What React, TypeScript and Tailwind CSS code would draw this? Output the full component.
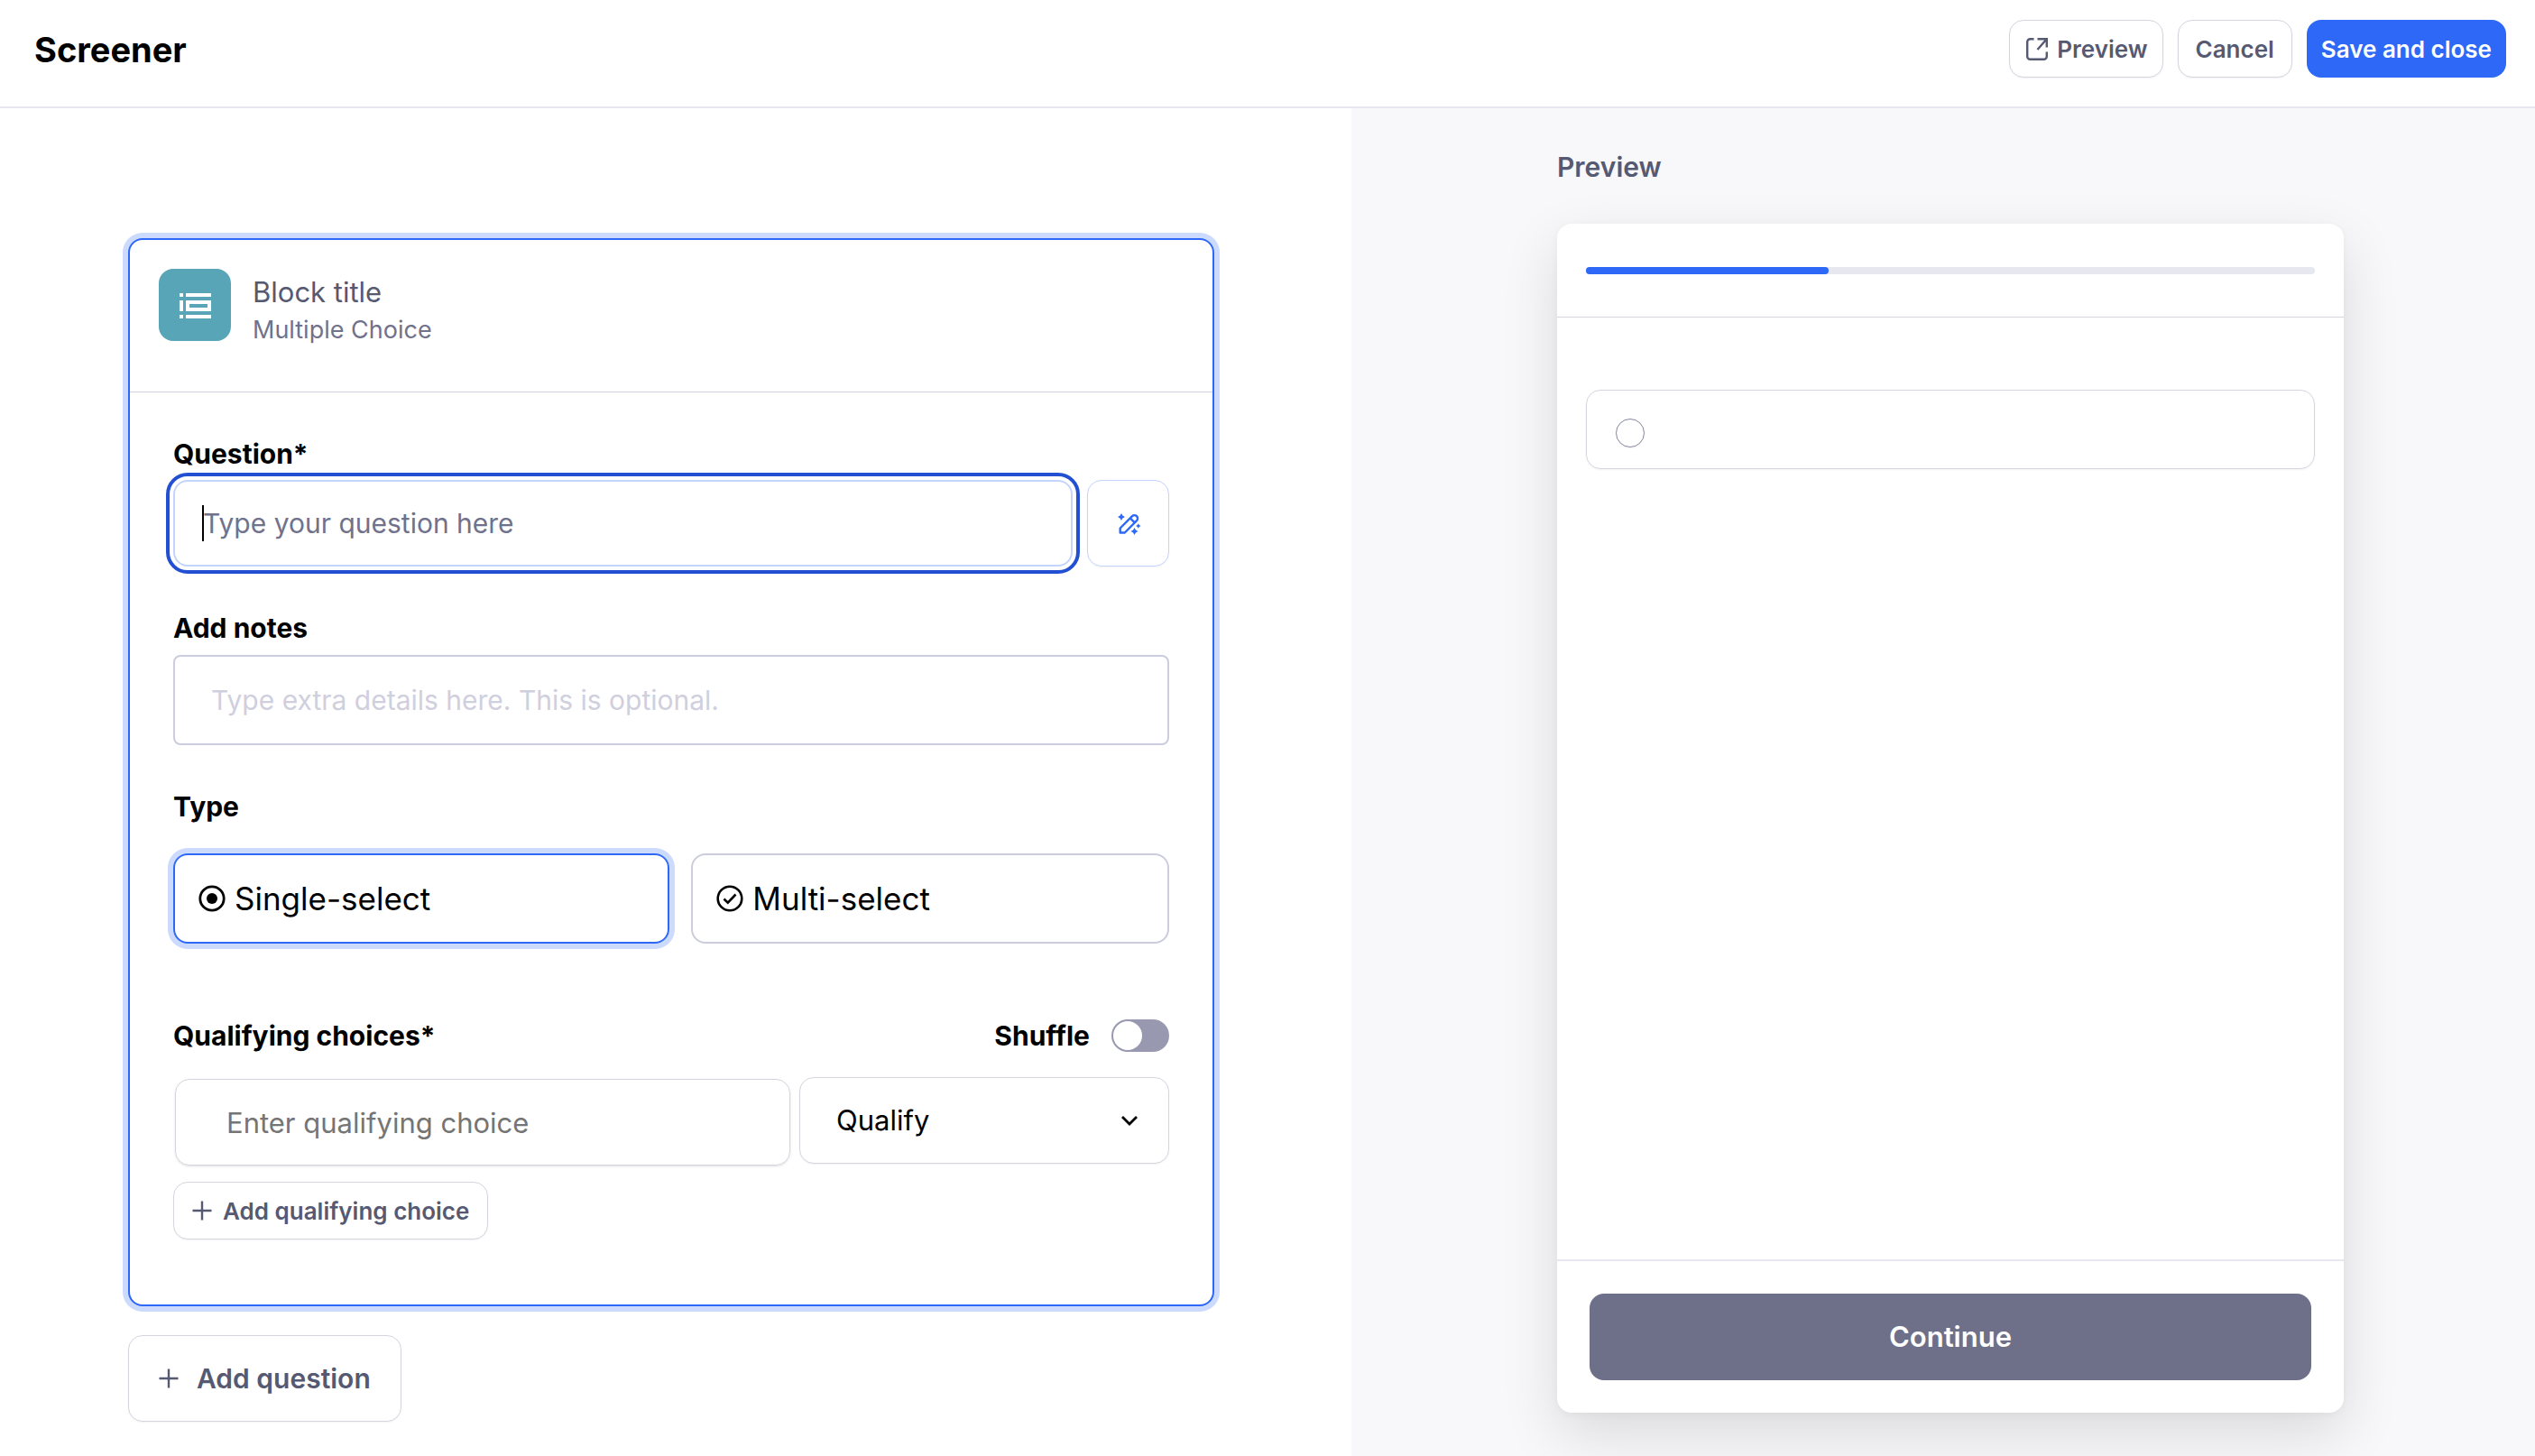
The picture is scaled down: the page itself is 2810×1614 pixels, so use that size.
import { useState } from "react";
import type { ReactNode } from "react";

interface TypeOptionProps {
  value: string;
  label: string;
  checked: boolean;
  onSelect: (value: string) => void;
  icon: ReactNode;
}

const outlineButton =
  "flex items-center justify-center rounded-2xl border border-[#d5d5e0] bg-white font-semibold text-[#565972] shadow-xs";

function ExternalIcon() {
  return (
    <svg className="h-7 w-7" viewBox="0 0 28 28" fill="none" stroke="currentColor" strokeWidth="2.4">
      <path d="M10.5 3.2H6.5A3.3 3.3 0 0 0 3.2 6.5V22.5A3.3 3.3 0 0 0 6.5 25.8H21.5A3.3 3.3 0 0 0 24.8 22.5V17.5" />
      <path d="M14.5 3.2H24.8V12.5M24.5 3.5L14.5 15" />
    </svg>
  );
}

function PlusIcon() {
  return (
    <svg className="h-[22px] w-[22px] shrink-0" viewBox="0 0 22 22" stroke="currentColor" strokeWidth="2.4">
      <path d="M11 0.5V21.5M0.5 11H21.5" />
    </svg>
  );
}

function ListBlockIcon() {
  return (
    <svg className="h-10 w-10" viewBox="0 0 40 40" fill="#fff">
      <path d="M3 7h4v4H3zM3 15h4v12H3zM3 31h4v4H3zM10 7h28v4H10zM10 31h28v4H10z" />
      <path fillRule="evenodd" d="M10 15h28v12H10zM14 19v4h20v-4z" />
    </svg>
  );
}

function MagicPenIcon() {
  return (
    <svg className="h-7 w-7" viewBox="0 0 28 28" fill="none" stroke="currentColor" strokeWidth="2.4" strokeLinejoin="round">
      <path d="M4.7 24.5V19.5L18 6.2A3.5 3.5 0 0 1 23 11.2L9.8 24.5Z" />
      <path d="M15.8 8.4L20.8 13.4" />
      <path
        fill="currentColor"
        stroke="none"
        d="M6 3L7.4 5.6L10 7L7.4 8.4L6 11L4.6 8.4L2 7L4.6 5.6ZM20.5 19L21.9 21.6L24.5 23L21.9 24.4L20.5 27L19.1 24.4L16.5 23L19.1 21.6ZM24.8 14.2L25.8 16L27.6 17L25.8 18L24.8 19.8L23.8 18L22 17L23.8 16Z"
      />
    </svg>
  );
}

function RadioIcon() {
  return (
    <svg className="h-[30px] w-[30px]" viewBox="0 0 30 30" fill="none" stroke="currentColor" strokeWidth="2.8">
      <circle cx="15" cy="15" r="13.2" />
      <circle cx="15" cy="15" r="6" fill="currentColor" stroke="none" />
    </svg>
  );
}

function CheckIcon() {
  return (
    <svg className="h-[30px] w-[30px]" viewBox="0 0 30 30" fill="none" stroke="currentColor" strokeWidth="2.6">
      <circle cx="15" cy="15" r="13.3" />
      <path d="M8.5 15.5L12.8 19.6L21.5 10.5" />
    </svg>
  );
}

function TypeOption({ value, label, checked, onSelect, icon }: TypeOptionProps) {
  return (
    <label
      className={`flex h-[100px] flex-auto cursor-pointer items-center gap-2.5 rounded-2xl border-2 px-[26px] text-[35px] ${
        checked ? "border-[#2e68f6] ring-6 ring-[#cbdafd]" : "border-[#cbccdd]"
      }`}
    >
      <input
        type="radio"
        name="selectType"
        className="sr-only"
        checked={checked}
        onChange={() => onSelect(value)}
      />
      {icon}
      {label}
    </label>
  );
}

function Header() {
  return (
    <header className="flex h-[120px] items-center justify-between border-b-2 border-[#e7e7f0] bg-white pr-8 pb-2.5 pl-[38px]">
      <h1 className="pt-0.5 text-[38px] font-bold">Screener</h1>
      <div className="flex gap-4 text-[26px]">
        <button type="button" className={`${outlineButton} h-16 gap-2 px-4`}>
          <ExternalIcon />
          Preview
        </button>
        <button type="button" className={`${outlineButton} h-16 px-[19px]`}>
          Cancel
        </button>
        <button type="button" className="h-16 rounded-2xl bg-[#2e68f6] px-4 font-semibold text-white">
          Save and close
        </button>
      </div>
    </header>
  );
}

function QuestionBlock() {
  const [selectType, setSelectType] = useState("single");
  const [question, setQuestion] = useState("");

  return (
    <section className="rounded-2xl border-2 border-[#2e68f6] bg-white ring-6 ring-[#cbdafd]">
      <div className="flex h-[169px] gap-6 border-b border-[#d2d2de] px-8 pt-8">
        <div className="flex h-20 w-20 items-center justify-center rounded-2xl bg-[#57a5b6]">
          <ListBlockIcon />
        </div>
        <div className="pt-1">
          <p className="text-[31px] leading-11 text-[#565972]">Block title</p>
          <p className="text-[27px] leading-10 text-[#70728c]">Multiple Choice</p>
        </div>
      </div>

      <div className="px-12 pt-12 pb-[72px]">
        <label htmlFor="question" className="block text-3xl leading-10 font-bold">
          Question*
        </label>
        <div className="mt-[9px] flex gap-4">
          <div className="relative flex-1">
            <input
              id="question"
              value={question}
              onChange={(e) => setQuestion(e.target.value)}
              placeholder="Type your question here"
              className="h-24 w-full rounded-2xl border-2 border-[#c5d4fc] px-[31px] text-3xl outline-4 outline-offset-4 outline-[#2350d2] placeholder:text-[#70728c]"
            />
            {question === "" && <span className="absolute top-7 left-8 h-10 w-0.5 bg-black" />}
          </div>
          <button
            type="button"
            aria-label="Improve question"
            className="flex h-24 w-[91px] items-center justify-center rounded-2xl border border-[#c5d4fc] text-[#2e68f6] shadow-xs"
          >
            <MagicPenIcon />
          </button>
        </div>

        <label htmlFor="notes" className="mt-12 block text-3xl leading-10 font-bold">
          Add notes
        </label>
        <input
          id="notes"
          placeholder="Type extra details here. This is optional."
          className="mt-2.5 h-[100px] w-full rounded-lg border-2 border-[#cbccdd] px-10 text-3xl placeholder:text-[#cfcfde]"
        />

        <fieldset className="mt-12">
          <legend className="text-3xl leading-10 font-bold">Type</legend>
          <div className="mt-8 flex gap-6">
            <TypeOption
              value="single"
              label="Single-select"
              checked={selectType === "single"}
              onSelect={setSelectType}
              icon={<RadioIcon />}
            />
            <TypeOption
              value="multi"
              label="Multi-select"
              checked={selectType === "multi"}
              onSelect={setSelectType}
              icon={<CheckIcon />}
            />
          </div>
        </fieldset>

        <div className="mt-20 flex items-center justify-between text-3xl leading-11 font-bold">
          <h2>Qualifying choices*</h2>
          <label className="flex cursor-pointer items-center gap-6">
            Shuffle
            <input type="checkbox" role="switch" className="peer sr-only" />
            <span className="flex h-9 w-16 rounded-full bg-[#9899b0] p-0.5 peer-checked:justify-end peer-checked:bg-[#2e68f6]">
              <span className="h-8 w-8 rounded-full bg-white" />
            </span>
          </label>
        </div>

        <div className="mt-6 flex gap-2.5">
          <input
            aria-label="Qualifying choice"
            placeholder="Enter qualifying choice"
            className="mt-0.5 ml-0.5 h-24 min-w-0 flex-1 rounded-2xl border border-[#d5d5e0] px-14 text-[31px] shadow-sm placeholder:text-[#757575]"
          />
          <div className="relative w-[410px]">
            <select
              aria-label="Choice outcome"
              className="h-24 w-full appearance-none rounded-2xl border border-[#d5d5e0] bg-white px-10 text-[31px] shadow-xs"
            >
              <option>Qualify</option>
              <option>Disqualify</option>
            </select>
            <svg
              className="pointer-events-none absolute top-9 right-8 h-6 w-6"
              viewBox="0 0 24 24"
              fill="none"
              stroke="#000"
              strokeWidth="2.8"
            >
              <path d="M4 8L12 16L20 8" />
            </svg>
          </div>
        </div>

        <button type="button" className={`${outlineButton} mt-[18px] h-16 gap-3 px-5 text-[26px]`}>
          <PlusIcon />
          Add qualifying choice
        </button>
      </div>
    </section>
  );
}

function PreviewPane() {
  return (
    <aside className="min-w-0 bg-[#f8f8fa] pt-[43px] pr-[212px] pb-12 pl-[228px]">
      <h2 className="text-3xl leading-11 font-semibold text-[#565972]">Preview</h2>
      <div className="mt-[41px] flex flex-col rounded-2xl bg-white shadow-[0_24px_64px_rgba(0,0,0,0.12),0_2px_8px_rgba(0,0,0,0.04)]">
        <div className="border-b border-[#d5d5e0] px-8 pt-12 pb-[47px]">
          <div className="h-2 rounded-full bg-[#e7e7f0]">
            <div className="h-2 w-1/3 rounded-full bg-[#2e68f6]" />
          </div>
        </div>
        <div className="min-h-[1044px] px-8 pt-20">
          <label className="flex h-[88px] items-center rounded-2xl border border-[#d5d5e0] px-8 pt-2 shadow-xs">
            <input
              type="radio"
              name="previewChoice"
              aria-label="Choice 1"
              className="h-8 w-8 appearance-none rounded-full border border-[#85879f] shadow-xs"
            />
          </label>
        </div>
        <div className="border-t-2 border-[#e7e7f0] p-9">
          <button type="button" className="h-24 w-full rounded-2xl bg-[#6e7089] text-[31px] font-semibold text-white">
            Continue
          </button>
        </div>
      </div>
    </aside>
  );
}

export default function App() {
  return (
    <div className="flex min-h-screen flex-col bg-white font-['Inter','Liberation_Sans',sans-serif] text-black">
      <Header />
      <div className="grid flex-1 grid-cols-[1498fr_1312fr]">
        <main className="min-w-0 pt-36 pr-[152px] pb-9 pl-[142px]">
          <QuestionBlock />
          <button type="button" className={`${outlineButton} mt-8 h-24 gap-5 px-[33px] text-3xl`}>
            <PlusIcon />
            Add question
          </button>
        </main>
        <PreviewPane />
      </div>
    </div>
  );
}
